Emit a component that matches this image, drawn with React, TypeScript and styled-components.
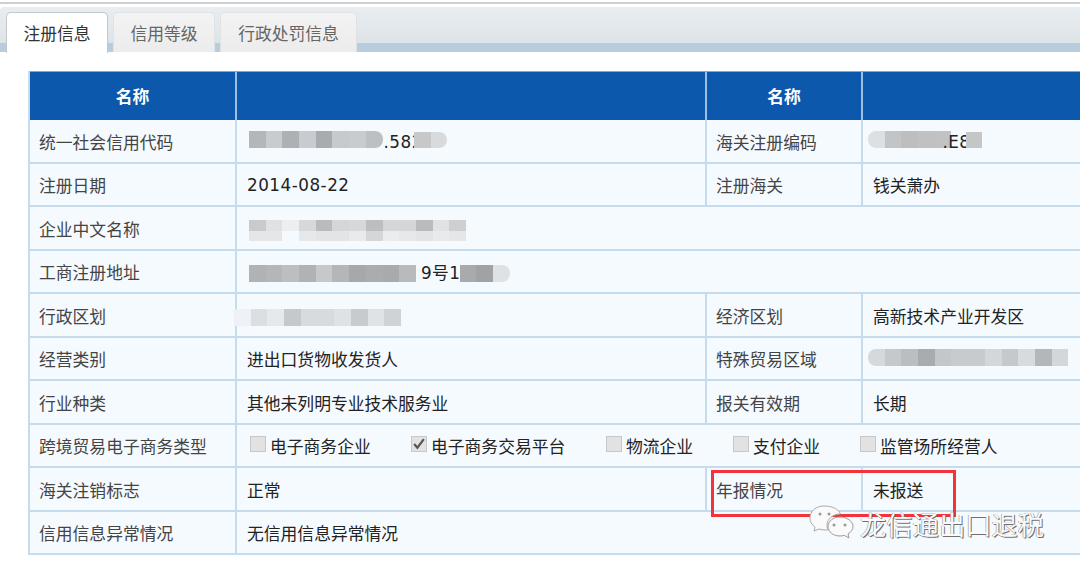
import React from 'react';
import styled, { createGlobalStyle } from 'styled-components';

const GlobalStyle = createGlobalStyle`
  html, body {
    margin: 0;
    padding: 0;
    width: 1080px;
    height: 573px;
    overflow: hidden;
    background: #fff;
    font-family: "DejaVu Sans", "Noto Sans CJK SC", sans-serif;
  }
`;

const Page = styled.div`
  position: relative;
  width: 1080px;
  height: 573px;
  overflow: hidden;
  padding-top: 2px;
  box-sizing: border-box;
`;

const TopLine = styled.div`
  height: 2px;
  background: #cfcfcf;
  margin-bottom: 3px;
`;

const TabBar = styled.div`
  display: flex;
  align-items: flex-end;
  gap: 5px;
  height: 45px;
  padding-left: 6px;
  background: linear-gradient(#e8edf1 0, #dde4e7 80%, #b7ccdc 80%, #b7ccdc 100%);
  border-top-left-radius: 4px;
`;

const Tab = styled.div<{ $active?: boolean; $width: number }>`
  box-sizing: border-box;
  width: ${p => p.$width}px;
  height: ${p => (p.$active ? 41 : 40)}px;
  margin-bottom: ${p => (p.$active ? -1 : 0)}px;
  display: flex;
  align-items: center;
  justify-content: center;
  border: 1px solid ${p => (p.$active ? '#c4c8cc' : '#e0e2e4')};
  border-bottom: none;
  border-radius: 5px 5px 0 0;
  background: ${p => (p.$active ? '#fff' : 'linear-gradient(#f3f3f3, #ececec)')};
  color: ${p => (p.$active ? '#333' : '#666')};
  font-size: 16.8px;
  font-family: "Noto Sans CJK SC", sans-serif;
`;

const Grid = styled.div`
  width: 1062px;
  margin: 19px 0 0 28px;
  border-left: 2px solid #c6dcec;
  box-sizing: border-box;
`;

const HeadRow = styled.div`
  display: grid;
  grid-template-columns: 207px 470px 156px 1fr;
  height: 49px;
  background: #0b58ad;
  border-top: 1px solid #7fa9d6;
  box-sizing: border-box;
`;

const HeadCell = styled.div`
  display: flex;
  align-items: center;
  justify-content: center;
  border-right: 2px solid #9dbfe2;
  color: #fff;
  font-weight: 700;
  font-size: 16.8px;
  font-family: "Noto Sans CJK SC", sans-serif;
`;

const Row = styled.div`
  display: grid;
  grid-template-columns: 207px 470px 156px 1fr;
  height: 43.5px;
  box-sizing: border-box;
  background: #f5faff;
  border-bottom: 2px solid #c6dcec;
`;

const Label = styled.div`
  display: flex;
  align-items: center;
  padding: 2px 0 0 9px;
  border-right: 2px solid #c6dcec;
  color: #444;
  font-size: 16.8px;
  font-family: "Noto Sans CJK SC", sans-serif;
`;

const Value = styled.div<{ $span?: number }>`
  grid-column: span ${p => p.$span || 1};
  display: flex;
  align-items: center;
  padding: 2px 0 0 10px;
  border-right: ${p => (p.$span === 3 ? 'none' : '2px solid #c6dcec')};
  color: #222;
  font-size: 16.8px;
  font-family: "Noto Sans CJK SC", sans-serif;
  white-space: nowrap;
  min-width: 0;
`;

const Latin = styled.span<{ $gap?: number }>`
  font-family: "DejaVu Sans", "Noto Sans CJK SC", sans-serif;
  font-size: 16.8px;
  letter-spacing: 0.5px;
  color: #222;
  margin-left: ${p => p.$gap || 0}px;
`;

const Mosaic = styled.div<{ $shift?: number; $dy?: number }>`
  display: flex;
  flex-direction: column;
  flex: none;
  margin-left: ${p => p.$shift || 0}px;
  margin-top: ${p => 2 * (p.$dy || 0)}px;
`;

const MosaicRow = styled.div<{ $height: number }>`
  display: flex;
  height: ${p => p.$height}px;
`;

const Tile = styled.div<{ $round?: 'left' | 'right' }>`
  width: 16.7px;
  height: 100%;
  flex: none;
  border-radius: ${p => (p.$round === 'left' ? '8px 0 0 8px' : p.$round === 'right' ? '0 8px 8px 0' : '0')};
`;

const Options = styled.div`
  display: grid;
  grid-template-columns: 161px 195px 127px 127px auto;
  padding-left: 3px;
`;

const Option = styled.div`
  display: flex;
  align-items: center;
  gap: 4px;
`;

const CheckBox = styled.div`
  width: 16px;
  height: 16px;
  box-sizing: border-box;
  background: #e2e2e2;
  border: 1px solid #c8c8c8;
  display: flex;
  align-items: center;
  justify-content: center;
  margin-top: -4px;
`;

const RedBox = styled.div`
  position: absolute;
  left: 711px;
  top: 470px;
  width: 245px;
  height: 47px;
  box-sizing: border-box;
  border: 3px solid #f3333a;
`;

const Watermark = styled.div`
  position: absolute;
  left: 809px;
  top: 504px;
  display: flex;
  align-items: center;
  gap: 6px;
  color: #fafafa;
  font-size: 26.3px;
  line-height: 40px;
  font-family: "Noto Sans CJK SC", sans-serif;
  text-shadow: 1px 1px 0 #6f6f6f, -0.5px 0 0 #8f8f8f, 0 -0.5px 0 #9f9f9f;
`;

const shade = (v: string) => (v === '' ? 'transparent' : `#${v}`);

type MosaicData = { height: number; tiles: string[] }[];

const Blur = ({ rows, shift, dy, roundLeft, roundRight }: { rows: MosaicData; shift?: number; dy?: number; roundLeft?: boolean; roundRight?: boolean }) => (
  <Mosaic $shift={shift} $dy={dy}>
    {rows.map((r, i) => (
      <MosaicRow key={i} $height={r.height}>
        {r.tiles.map((c, j) => (
          <Tile
            key={j}
            $round={roundLeft && j === 0 ? 'left' : roundRight && j === r.tiles.length - 1 ? 'right' : undefined}
            style={{ background: shade(c) }}
          />
        ))}
      </MosaicRow>
    ))}
  </Mosaic>
);

const OPTIONS = [
  { text: '电子商务企业', checked: false },
  { text: '电子商务交易平台', checked: true },
  { text: '物流企业', checked: false },
  { text: '支付企业', checked: false },
  { text: '监管场所经营人', checked: false },
];

const WeChat = () => (
  <svg width="45" height="38" viewBox="0 0 45 38">
    <path d="M15 1C7 1 1 6 1 13c0 4 2 7 5 9l-1 4 5-2c2 .5 4 1 6 1 1 0 2 0 3-.2C18 23 18 21 18 20c0-6 6-11 13-11h.5C29.500 4 23 1 15 1z" fill="#fafafa" stroke="#aaa" strokeWidth="1" />
    <path d="M31 12c-6.500 0-12 4-12 9.500S24.500 31 31 31c1.500 0 3-.3 4.300-.7L40 33l-1-4c3-2 5-4.500 5-7.500C44 16 37.500 12 31 12z" fill="#fafafa" stroke="#999" strokeWidth="1" />
    <circle cx="11" cy="9" r="1.500" fill="#999" />
    <circle cx="20" cy="9" r="1.500" fill="#999" />
    <circle cx="25" cy="20" r="1.500" fill="#999" />
    <circle cx="36" cy="20" r="1.500" fill="#999" />
  </svg>
);

export default function App() {
  return (
    <Page>
      <GlobalStyle />
      <TopLine />
      <TabBar>
        <Tab $active $width={102}>注册信息</Tab>
        <Tab $width={102}>信用等级</Tab>
        <Tab $width={137}>行政处罚信息</Tab>
      </TabBar>
      <Grid>
        <HeadRow>
          <HeadCell>名称</HeadCell>
          <HeadCell />
          <HeadCell>名称</HeadCell>
          <HeadCell />
        </HeadRow>
        <Row>
          <Label>统一社会信用代码</Label>
          <Value>
            <Blur shift={2} dy={-2.5} roundRight rows={[{ height: 17, tiles: ['b4b7b9', 'c8cccf', 'aeb1b3', 'c8ccd0', 'a9acae', 'c6cacd', 'c8cccf', 'bcc0c3'] }]} />
            <Latin $gap={1}>.582</Latin>
            <Blur shift={-9} dy={-2} roundRight rows={[{ height: 16, tiles: ['c6c8ca', 'd8dadc'] }]} />
          </Value>
          <Label>海关注册编码</Label>
          <Value>
            <Blur shift={-5} dy={-2.5} roundLeft rows={[{ height: 17, tiles: ['dde0e3', 'c2c4c6', 'bcbec0', 'bfc1c3', 'c0c2c4'] }]} />
            <Latin $gap={-9}>.E8</Latin>
            <Blur shift={-5} dy={-2} rows={[{ height: 16, tiles: ['c4c6c8'] }]} />
          </Value>
        </Row>
        <Row>
          <Label>注册日期</Label>
          <Value><Latin>2014-08-22</Latin></Value>
          <Label>注册海关</Label>
          <Value>钱关萧办</Value>
        </Row>
        <Row>
          <Label>企业中文名称</Label>
          <Value $span={3}>
            <Blur shift={2} dy={1.5} rows={[
              { height: 11, tiles: ['c8cacc', 'dfe1e3', 'eceef0', 'd6d8da', 'b9bbbd', 'd4d6d8', 'd6d8da', 'bcbec0', 'd4d6d8', 'd4d6d8', 'b9bbbd', 'e0e2e4', 'cdcfd1'] },
              { height: 10, tiles: ['e4e6e8', 'e4e6e8', '', 'e6e8ea', 'e2e4e6', 'e2e4e6', 'e8eaec', 'd4d6d8', 'eaecee', 'e6e8ea', 'e2e4e6', 'e8eaec', 'e4e6e8'] },
            ]} />
          </Value>
        </Row>
        <Row>
          <Label>工商注册地址</Label>
          <Value $span={3}>
            <Blur shift={2} dy={1} rows={[{ height: 17, tiles: ['b0b2b4', 'b4b6b8', 'bcbec0', 'b0b2b4', 'c6c8ca', 'b4b6b8', 'a6a8aa', 'aaacae', 'a8aaac', 'b8babc'] }]} />
            <Latin $gap={5}>9号1</Latin>
            <Blur shift={-1} dy={1} roundRight rows={[{ height: 17, tiles: ['a8aaac', 'a0a2a4', 'dfe2e5'] }]} />
          </Value>
        </Row>
        <Row>
          <Label>行政区划</Label>
          <Value>
            <Blur shift={-13} dy={1.5} rows={[{ height: 17, tiles: ['eef2f6', 'dcdfe2', 'e6e9ec', 'c6c9cc', 'd8dbde', 'd8dbde', 'dfe2e5', 'c8cbce', 'e0e3e6', 'd0d3d6'] }]} />
          </Value>
          <Label>经济区划</Label>
          <Value>高新技术产业开发区</Value>
        </Row>
        <Row>
          <Label>经营类别</Label>
          <Value>进出口货物收发货人</Value>
          <Label>特殊贸易区域</Label>
          <Value>
            <Blur shift={-5} dy={-2} roundLeft rows={[{ height: 17, tiles: ['d6d9dc', 'c6c9cc', 'bbbec1', 'a9acae', 'c4c7ca', 'c8cbce', 'c8cbce', 'd4d7da', 'c6c9cc', 'd8dbde', 'b4b7ba', 'd4d7da'] }]} />
          </Value>
        </Row>
        <Row>
          <Label>行业种类</Label>
          <Value>其他未列明专业技术服务业</Value>
          <Label>报关有效期</Label>
          <Value>长期</Value>
        </Row>
        <Row>
          <Label>跨境贸易电子商务类型</Label>
          <Value $span={3}>
            <Options>
              {OPTIONS.map(o => (
                <Option key={o.text}>
                  <CheckBox>
                    {o.checked && (
                      <svg width="14" height="14" viewBox="0 0 13 13">
                        <path d="M2 6.500l3 3.500 6-8" fill="none" stroke="#555" strokeWidth="2" />
                      </svg>
                    )}
                  </CheckBox>
                  {o.text}
                </Option>
              ))}
            </Options>
          </Value>
        </Row>
        <Row>
          <Label>海关注销标志</Label>
          <Value>正常</Value>
          <Label>年报情况</Label>
          <Value>未报送</Value>
        </Row>
        <Row>
          <Label>信用信息异常情况</Label>
          <Value $span={3}>无信用信息异常情况</Value>
        </Row>
      </Grid>
      <RedBox />
      <Watermark>
        <WeChat />
        龙信通出口退税
      </Watermark>
    </Page>
  );
}
